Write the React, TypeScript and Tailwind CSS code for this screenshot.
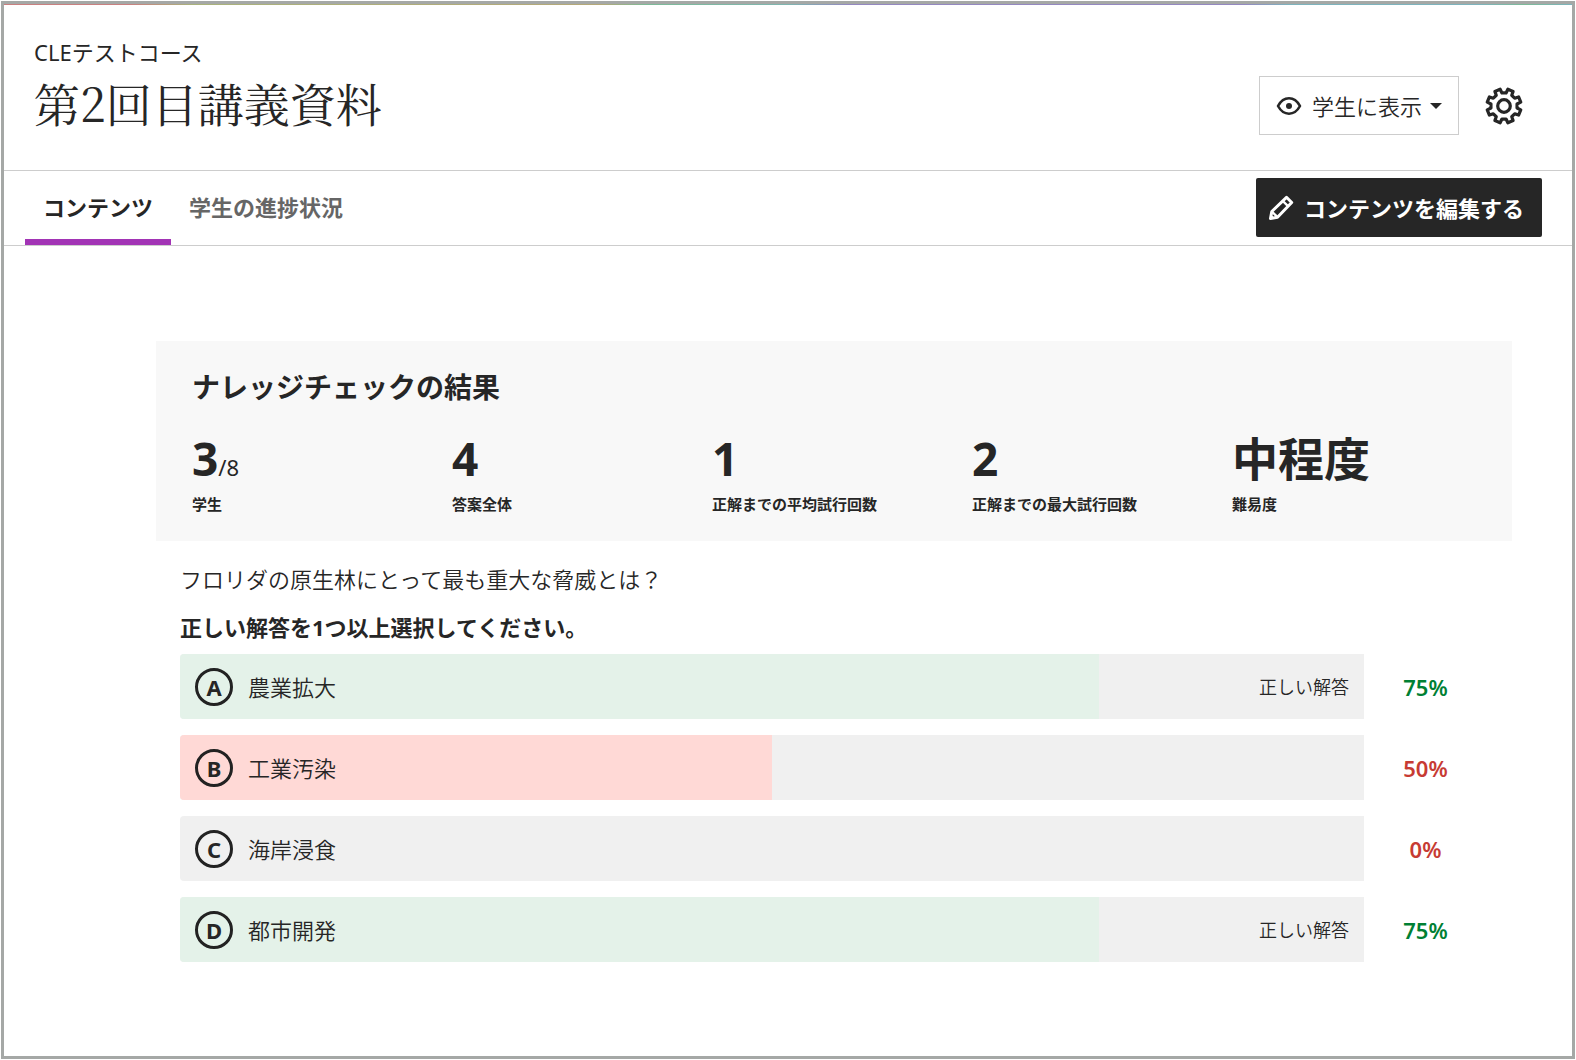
import { useState } from "react";
import clsx from "clsx";

type Stat = {
  label: string;
  value: string;
  total?: string;
};

type Answer = {
  letter: string;
  text: string;
  percent: number;
  fill: number;
  correct: boolean;
};

const tabs = ["コンテンツ", "学生の進捗状況"];

const stats: Stat[] = [
  { label: "学生", value: "3", total: "8" },
  { label: "答案全体", value: "4" },
  { label: "正解までの平均試行回数", value: "1" },
  { label: "正解までの最大試行回数", value: "2" },
  { label: "難易度", value: "中程度" },
];

const answers: Answer[] = [
  { letter: "A", text: "農業拡大", percent: 75, fill: 77.6, correct: true },
  { letter: "B", text: "工業汚染", percent: 50, fill: 50, correct: false },
  { letter: "C", text: "海岸浸食", percent: 0, fill: 0, correct: false },
  { letter: "D", text: "都市開発", percent: 75, fill: 77.6, correct: true },
];

// outline of an eight-toothed gear centred on 0,0
function gearPath() {
  const points: string[] = [];
  for (let i = 0; i < 8; i++) {
    const mid = i * 45 + 22.5;
    const steps = [
      [13.2, -13.5],
      [17.2, -9.5],
      [17.2, 9.5],
      [13.2, 13.5],
    ];
    steps.forEach(([radius, offset]) => {
      const angle = ((mid + offset) * Math.PI) / 180;
      points.push(`${(radius * Math.cos(angle)).toFixed(2)} ${(radius * Math.sin(angle)).toFixed(2)}`);
    });
  }
  return `M${points.join("L")}Z`;
}

function GearIcon() {
  return (
    <svg viewBox="-20 -20 40 40" className="size-10" fill="none" stroke="currentColor" strokeWidth="3.200" strokeLinejoin="round" aria-hidden="true">
      <path d={gearPath()} />
      <circle r="6.3" />
    </svg>
  );
}

function EyeIcon() {
  return (
    <svg viewBox="0 0 26 20" className="h-5 w-[26px]" fill="none" stroke="currentColor" strokeWidth="2.6" strokeLinejoin="round" aria-hidden="true">
      <path d="M2 10C5 4.500 8.500 2.300 13 2.300S21 4.500 24 10C21 15.500 17.500 17.700 13 17.700S5 15.500 2 10Z" />
      <circle cx="13" cy="10" r="3" fill="currentColor" stroke="none" />
    </svg>
  );
}

function PencilIcon() {
  return (
    <svg viewBox="0 0 26 26" className="size-[26px]" fill="none" stroke="currentColor" strokeWidth="3" strokeLinejoin="round" aria-hidden="true">
      <path d="M2.500 23.500L3.800 16.500L18.500 2.300L23.700 7.500L9.500 22.200Z" />
      <path d="M3.800 16.500L9.500 22.200M14.800 6L20 11.200" strokeWidth="2.400" />
      <path d="M2.500 23.500L3.200 20L6 22.800Z" fill="currentColor" strokeWidth="1" />
    </svg>
  );
}

export default function App() {
  const [activeTab, setActiveTab] = useState(tabs[0]);

  return (
    <div className="min-h-screen bg-white p-px font-['Noto_Sans','Noto_Sans_CJK_JP',sans-serif] text-[22px] leading-8 text-[#262626]">
      <div className="flex min-h-[1058px] flex-col border-[3px] border-[#a5a8a6]">
        <div className="h-px bg-[linear-gradient(to_right,#c98080_8%,#a9b27c_12%,#b5a878_38%,#7dba98_41%,#7fb5b0_50%,#9488c0_54%,#9488c0_79%,#7db3bd_82%,#7db3bd_94%,#7dba98_97%,#7db3bd)]" />

        <header className="flex items-start justify-between border-b border-[#cdcdcd] pr-12 pb-[34px] pl-[30px]">
          <div className="pt-[31px]">
            <p>CLEテストコース</p>
            <h1 className="font-['Noto_Serif_CJK_JP','Noto_Sans_CJK_JP',serif] text-[46px] leading-[68px] font-normal">
              第2回目講義資料
            </h1>
          </div>
          <div className="flex items-center gap-[25px] pt-[71px]">
            <button type="button" className="flex h-[59px] items-center border border-[#cdcdcd] px-4">
              <EyeIcon />
              <span className="ml-2.5 font-[350]">学生に表示</span>
              <svg viewBox="0 0 12 6" className="ml-2 h-1.5 w-3" fill="currentColor" aria-hidden="true">
                <path d="M0 0H12L6 6Z" />
              </svg>
            </button>
            <button type="button" aria-label="設定">
              <GearIcon />
            </button>
          </div>
        </header>

        <div className="flex h-[75px] items-start justify-between border-b border-[#cdcdcd] pr-[30px] pl-[21px]">
          <nav className="flex self-stretch">
            {tabs.map((tab) => (
              <button
                key={tab}
                type="button"
                onClick={() => setActiveTab(tab)}
                className={clsx(
                  "border-b-6 px-[18px] pt-1 font-bold",
                  tab === activeTab ? "border-[#a234b5]" : "border-transparent text-[#666666]"
                )}
              >
                {tab}
              </button>
            ))}
          </nav>
          <button type="button" className="mt-[7px] flex h-[59px] items-center gap-2.5 rounded-xs bg-[#262626] px-3 font-bold text-white">
            <PencilIcon />
            <span className="pr-1.5">コンテンツを編集する</span>
          </button>
        </div>

        <main className="pt-[95px] pr-[60px] pl-[152px]">
          <section className="h-[200px] bg-[#f8f8f8] pt-[26px] pr-5 pl-9">
            <h2 className="text-[28px] leading-10 font-bold">ナレッジチェックの結果</h2>
            <dl className="mt-[21px] grid grid-cols-5">
              {stats.map((stat) => (
                <div key={stat.label} className="flex flex-col-reverse">
                  <dt className="mt-1 text-[15px] leading-6 font-bold">{stat.label}</dt>
                  <dd className="h-[60px] leading-[60px]">
                    <span className="text-[46px] font-bold">{stat.value}</span>
                    {stat.total && <span>/{stat.total}</span>}
                  </dd>
                </div>
              ))}
            </dl>
          </section>

          <section className="pt-[22px] pr-[25px] pl-6">
            <p className="font-[350]">フロリダの原生林にとって最も重大な脅威とは？</p>
            <p className="mt-4 font-bold">正しい解答を1つ以上選択してください。</p>
            <ul className="mt-[11px] flex flex-col gap-4">
              {answers.map((answer) => (
                <li key={answer.letter} className="flex items-center">
                  <div className="relative flex h-[65px] flex-1 items-center overflow-hidden rounded-l-sm bg-[#f0f0f0] px-[15px]">
                    <div
                      className={clsx("absolute inset-y-0 left-0", answer.correct ? "bg-[#e4f2e9]" : "bg-[#ffd9d6]")}
                      style={{ width: `${answer.fill}%` }}
                    />
                    <span className="relative flex size-[38px] items-center justify-center rounded-full border-3 border-[#222222] font-bold">
                      {answer.letter}
                    </span>
                    <span className="relative ml-[15px] flex-1 font-[350]">{answer.text}</span>
                    {answer.correct && <span className="relative text-[18px] font-[350]">正しい解答</span>}
                  </div>
                  <span
                    className={clsx(
                      "w-[123px] text-center font-semibold",
                      answer.correct ? "text-[#008033]" : "text-[#c73b33]"
                    )}
                  >
                    {answer.percent}%
                  </span>
                </li>
              ))}
            </ul>
          </section>
        </main>
      </div>
    </div>
  );
}
